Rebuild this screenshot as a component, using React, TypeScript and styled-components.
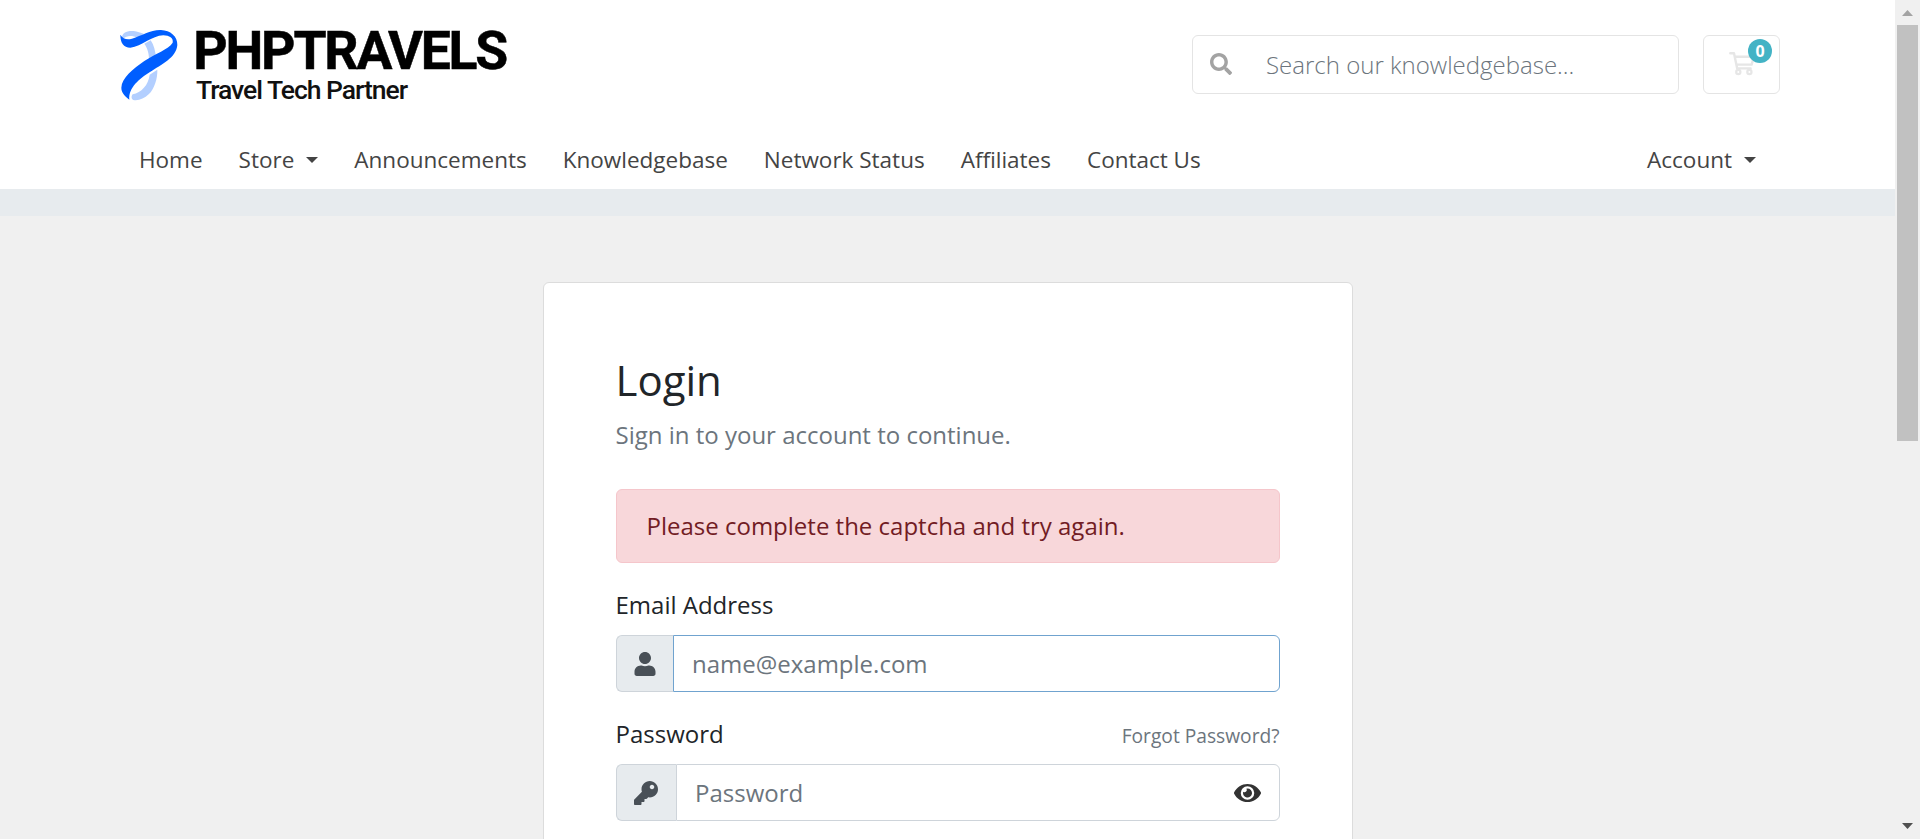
import React from "react";
import styled, { createGlobalStyle } from "styled-components";
import { FaSearch, FaUser, FaKey, FaEye } from "react-icons/fa";

const GlobalStyle = createGlobalStyle`
  *, *::before, *::after { box-sizing: border-box; }
  html, body { margin: 0; height: 839px; overflow: hidden; }
  body {
    font-family: "Open Sans", sans-serif;
    font-size: 24px;
    line-height: 36px;
    color: #212529;
    background: #f0f0f0;
  }
`;

const Window = styled.div`
  display: flex;
  width: 1920px;
  height: 839px;
  overflow: hidden;
`;

const Page = styled.div`
  flex: 1;
  height: 839px;
  overflow: hidden;
`;

const Header = styled.header`
  height: 189px;
  background: #fff;
`;

const Container = styled.div`
  width: 1665px;
  margin: 0 auto;
  display: flex;
`;

const TopBar = styled(Container)`
  height: 128px;
  align-items: center;
`;

const Logo = styled.svg`
  display: block;
  width: 400px;
  height: 100px;
  margin-right: auto;
`;

const SearchForm = styled.form`
  display: flex;
  align-items: center;
  width: 487px;
  height: 59px;
  border: 1px solid #e4e4e4;
  border-radius: 6px;
  background: #fff;
`;

const SearchIcon = styled.span`
  display: flex;
  width: 55px;
  padding-left: 17px;
  color: #a3a3a3;
  svg { display: block; width: 22px; height: 22px; }
`;

const Field = styled.input<{ $light?: boolean; $pad: number }>`
  flex: 1;
  min-width: 0;
  height: 100%;
  border: 0;
  outline: 0;
  background: transparent;
  padding: 0 ${(p) => p.$pad}px;
  font: inherit;
  font-weight: ${(p) => (p.$light ? 300 : 400)};
  color: #495057;
  &::placeholder { color: #6c757d; opacity: 1; }
`;

const CartButton = styled.a`
  position: relative;
  display: flex;
  width: 77px;
  height: 59px;
  margin-left: 24px;
  padding: 16px 0 0 25px;
  border: 1px solid #e4e4e4;
  border-radius: 6px;
  color: #e6e6e6;
`;

const Badge = styled.span`
  position: absolute;
  top: 3px;
  right: 7px;
  width: 24px;
  height: 24px;
  border-radius: 12px;
  background: #43b3c5;
  color: #fff;
  font-size: 16px;
  font-weight: 700;
  line-height: 24px;
  text-align: center;
`;

const Nav = styled(Container)`
  padding: 13.6px 24px 0 24px;
  gap: 36px;
`;

const NavItem = styled.a<{ $end?: boolean }>`
  display: flex;
  align-items: center;
  color: #444;
  font-size: 22.5px;
  white-space: nowrap;
  margin-left: ${(p) => (p.$end ? "auto" : "0")};
`;

const Caret = styled.span`
  margin-left: 12px;
  border-top: 6px solid #444;
  border-left: 6px solid transparent;
  border-right: 6px solid transparent;
`;

const Band = styled.div`
  height: 27px;
  background: #e7ebee;
`;

const Card = styled.main`
  width: 810px;
  height: 700px;
  margin: 66px auto 0;
  padding: 72px;
  border: 1px solid #dcdcdc;
  border-radius: 6px;
  background: #fff;
`;

const Title = styled.h1`
  margin: 0 0 12px;
  font-size: 42px;
  font-weight: 400;
  line-height: 50.4px;
`;

const Subtitle = styled.p`
  margin: 0 0 35.6px;
  color: #6c757d;
`;

const Alert = styled.div`
  height: 74px;
  margin-bottom: 24px;
  padding: 18px 30px;
  border: 1px solid #f5c6cb;
  border-radius: 6px;
  background: #f8d7da;
  color: #721c24;
`;

const LabelRow = styled.div`
  display: flex;
  justify-content: space-between;
  align-items: baseline;
  height: 36px;
  margin-bottom: 12px;
`;

const Forgot = styled.a`
  font-size: 19.2px;
  color: #6c757d;
`;

const InputGroup = styled.div`
  display: flex;
  height: 57px;
  margin-bottom: 24px;
`;

const Addon = styled.span<{ $width: number; $pad: number }>`
  display: flex;
  align-items: center;
  width: ${(p) => p.$width}px;
  padding-left: ${(p) => p.$pad}px;
  border: 1px solid #ced4da;
  border-right: 0;
  border-radius: 6px 0 0 6px;
  background: #e7ebee;
  color: #495057;
  svg { display: block; width: 24px; height: 24px; }
`;

const InputBox = styled.div<{ $focused?: boolean }>`
  flex: 1;
  display: flex;
  align-items: center;
  border: 1px solid ${(p) => (p.$focused ? "#70a3cf" : "#ced4da")};
  border-radius: 0 6px 6px 0;
  background: #fff;
`;

const Reveal = styled.span`
  display: flex;
  align-items: center;
  justify-content: center;
  width: 63px;
  color: #333;
  svg { display: block; width: 27px; height: 24px; }
`;

const ScrollTrack = styled.div`
  display: flex;
  flex-direction: column;
  align-items: center;
  width: 25px;
  height: 839px;
  background: #f0f0f0;
`;

const ArrowBox = styled.svg`
  display: block;
  width: 25px;
  height: 25px;
`;

const Thumb = styled.div`
  width: 21px;
  height: 416px;
  margin-bottom: auto;
  background: #c1c1c1;
`;

const navLinks = [
  { label: "Home" },
  { label: "Store", menu: true },
  { label: "Announcements" },
  { label: "Knowledgebase" },
  { label: "Network Status" },
  { label: "Affiliates" },
  { label: "Contact Us" },
];

function BrandLogo() {
  return (
    <Logo viewBox="115 14 400 100" role="img" aria-label="PHPTRAVELS">
      <g transform="translate(100 10) scale(0.33333)">
        <path
          fill="#b3cfff"
          d="M66 84C65 68 82 61 101 63C112 64 122 68 132 72L112 84C98 76 80 76 70 86ZM133 101L152 91C162 105 166 124 168 142L147 154C148 134 143 114 133 101ZM149 194L172 179C173 205 163 237 146 253C133 266 115 273 100 270C94 268 93 259 98 253C124 247 145 226 149 194Z"
        />
        <path
          fill="#005eff"
          d="M61 74C69 88 82 90 96 86C126 77 151 59 183 60C211 61 233 79 232 105C229 143 184 164 150 186C120 205 85 232 88 269C76 260 64 249 64 233C65 204 100 176 133 153C166 130 205 119 218 98C221 85 208 76 190 76C155 77 126 109 91 113C71 113 61 98 61 74Z"
        />
      </g>
      <text x="193.3" y="69.4" fontFamily="Roboto" fontWeight="700" fontSize="53.5" textLength="315" lengthAdjust="spacing" stroke="#000" strokeWidth="0.5">
        PHPTRAVELS
      </text>
      <text x="196" y="99" fontFamily="Roboto" fontWeight="500" fontSize="26.5" textLength="212" lengthAdjust="spacing" fill="#111">
        Travel Tech Partner
      </text>
    </Logo>
  );
}

function CartIcon() {
  return (
    <svg width="27" height="24" viewBox="0 0 27 24" fill="none" stroke="currentColor">
      <path strokeWidth="2.4" strokeLinecap="round" strokeLinejoin="round" d="M1.3 1.3H5L8.2 16.4H21.6M5.6 4.7H25L22.6 12.6H7.4" />
      <circle cx="9.3" cy="20" r="2.1" strokeWidth="2.2" />
      <circle cx="20.4" cy="20" r="2.1" strokeWidth="2.2" />
    </svg>
  );
}

export default function App() {
  return (
    <Window>
      <GlobalStyle />
      <Page>
        <Header>
          <TopBar>
            <BrandLogo />
            <SearchForm>
              <SearchIcon><FaSearch /></SearchIcon>
              <Field $light $pad={18} placeholder="Search our knowledgebase..." />
            </SearchForm>
            <CartButton>
              <CartIcon />
              <Badge>0</Badge>
            </CartButton>
          </TopBar>
          <Nav as="nav">
            {navLinks.map((l) => (
              <NavItem key={l.label}>
                {l.label}
                {l.menu && <Caret />}
              </NavItem>
            ))}
            <NavItem $end>
              Account
              <Caret />
            </NavItem>
          </Nav>
        </Header>
        <Band />
        <Card>
          <Title>Login</Title>
          <Subtitle>Sign in to your account to continue.</Subtitle>
          <Alert>Please complete the captcha and try again.</Alert>
          <LabelRow>
            <label>Email Address</label>
          </LabelRow>
          <InputGroup>
            <Addon $width={57} $pad={16}><FaUser /></Addon>
            <InputBox $focused>
              <Field $pad={18.5} placeholder="name@example.com" />
            </InputBox>
          </InputGroup>
          <LabelRow>
            <label>Password</label>
            <Forgot>Forgot Password?</Forgot>
          </LabelRow>
          <InputGroup>
            <Addon $width={60} $pad={17}><FaKey /></Addon>
            <InputBox>
              <Field $pad={18.5} placeholder="Password" />
              <Reveal><FaEye /></Reveal>
            </InputBox>
          </InputGroup>
        </Card>
      </Page>
      <ScrollTrack>
        <ArrowBox viewBox="0 0 25 25"><path d="M7 16L12.5 10L18 16Z" fill="#a3a3a3" /></ArrowBox>
        <Thumb />
        <ArrowBox viewBox="0 0 25 25"><path d="M7 9L12.5 15L18 9Z" fill="#505050" /></ArrowBox>
      </ScrollTrack>
    </Window>
  );
}
